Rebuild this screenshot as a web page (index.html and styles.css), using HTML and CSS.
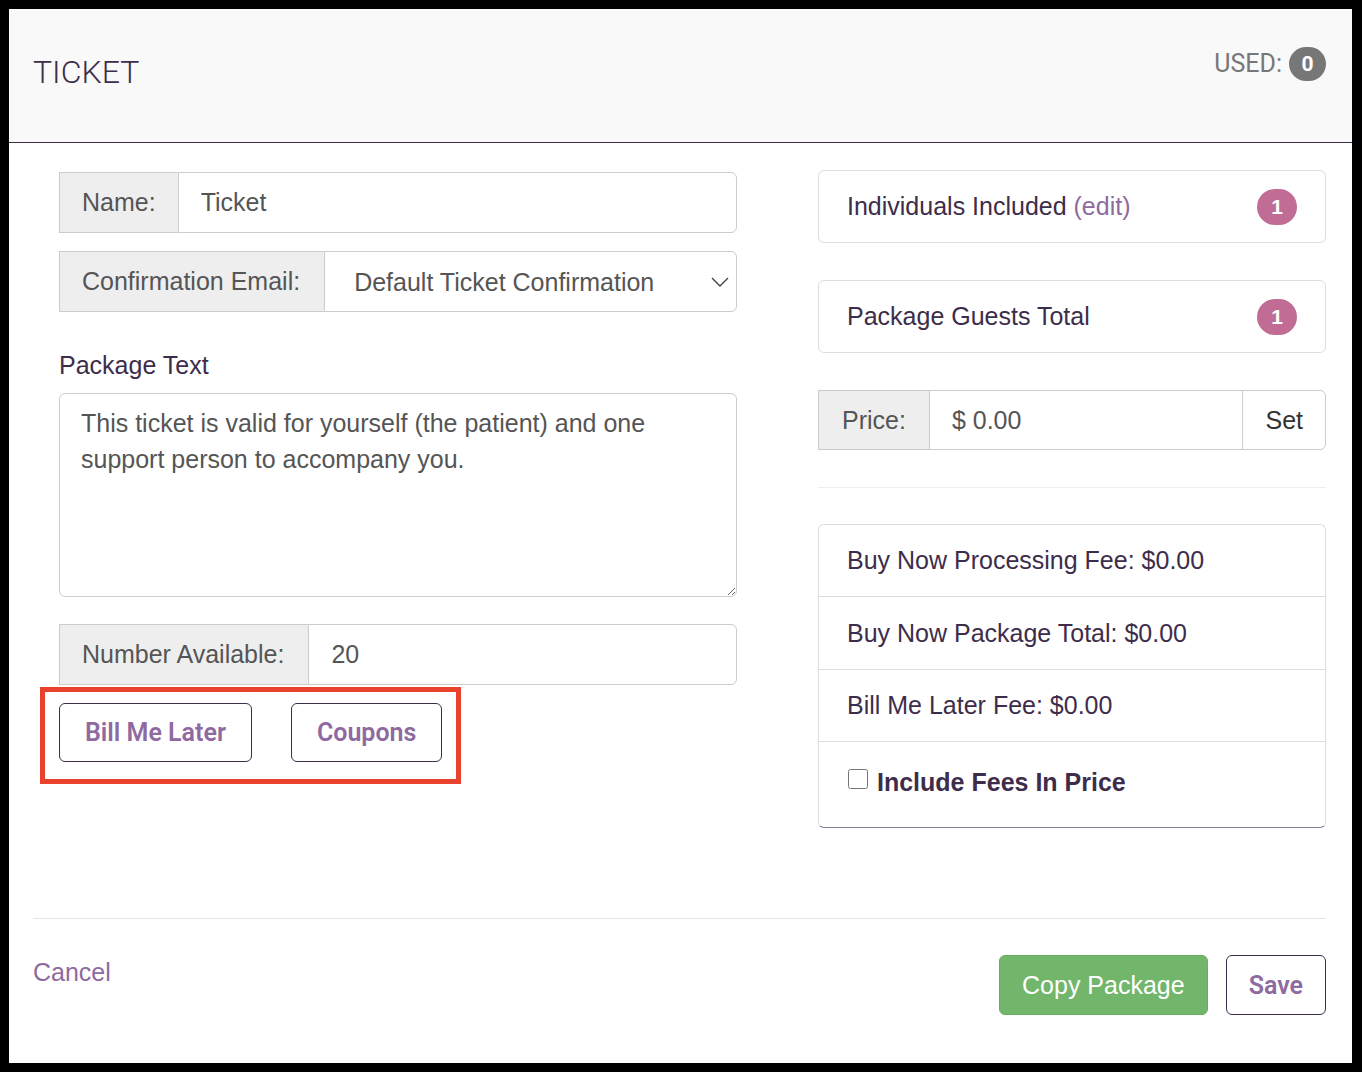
FILE: index.html
```html
<!DOCTYPE html>
<html lang="en">
<head>
<meta charset="UTF-8">
<title>Edit Package – Ticket</title>
<link rel="stylesheet" href="styles.css">
</head>
<body>

<div class="modal">

  <!-- ===== HEADER ===== -->
  <div class="modal-header">
    <h2 class="modal-title">TICKET</h2>
    <div class="used">USED: <span class="count">0</span></div>
  </div>

  <!-- ===== BODY ===== -->
  <div class="modal-body">

    <div class="col-left">
      <div class="input-group">
        <span class="addon">Name:</span>
        <input class="form-control" value="Ticket">
      </div>

      <div class="input-group">
        <span class="addon wide">Confirmation Email:</span>
        <div class="select-wrap">
          <select class="form-control select">
            <option>Default Ticket Confirmation</option>
          </select>
          <svg class="chevron" width="18" height="10" viewBox="0 0 18 10">
            <polyline points="1,1 9,9 17,1" fill="none" stroke="#444" stroke-width="1.4"/>
          </svg>
        </div>
      </div>

      <label class="field-label" for="pkgText">Package Text</label>
      <textarea id="pkgText" class="text-box">This ticket is valid for yourself (the patient) and one support person to accompany you.</textarea>

      <div class="input-group spaced">
        <span class="addon wide">Number Available:</span>
        <input class="form-control" value="20">
      </div>

      <div class="highlight">
        <button class="btn-outline">Bill Me Later</button>
        <button class="btn-outline">Coupons</button>
      </div>
    </div>

    <div class="col-right">
      <div class="card">
        <span>Individuals Included <a class="link" href="#">(edit)</a></span>
        <span class="badge">1</span>
      </div>

      <div class="card">
        <span>Package Guests Total</span>
        <span class="badge">1</span>
      </div>

      <div class="input-group price">
        <span class="addon">Price:</span>
        <input class="form-control flat" value="$ 0.00">
        <button class="btn-set">Set</button>
      </div>

      <hr class="divider">

      <div class="list">
        <div class="list-item">Buy Now Processing Fee: $0.00</div>
        <div class="list-item tall">Buy Now Package Total: $0.00</div>
        <div class="list-item">Bill Me Later Fee: $0.00</div>
        <div class="list-item last">
          <label class="check"><input type="checkbox"> Include Fees In Price</label>
        </div>
      </div>
    </div>

  </div>

  <!-- ===== FOOTER ===== -->
  <div class="modal-footer">
    <a class="link cancel" href="#">Cancel</a>
    <div class="actions">
      <button class="btn-green">Copy Package</button>
      <button class="btn-outline save">Save</button>
    </div>
  </div>

</div>

</body>
</html>
```

FILE: styles.css
```css
* { box-sizing: border-box; }

body {
  margin: 0;
  padding: 9px 10px 9px 9px;
  background: #000;
  font-family: "Liberation Sans", Arial, sans-serif;
  font-size: 25px;
  color: #3d2d4a;
}

.modal {
  height: 1054px;
  background: #fff;
  display: flex;
  flex-direction: column;
}

/* ===== HEADER ===== */
.modal-header {
  height: 134px;
  padding: 0 26px 0 24px;
  background: #f9f9f9;
  border-bottom: 1px solid #3d2d4a;
  display: flex;
  justify-content: space-between;
  align-items: flex-start;
}

.modal-title {
  margin: 43px 0 0;
  font: 300 32px/40px Roboto, sans-serif;
  color: #3d2d4a;
}

.used {
  margin-top: 38px;
  display: flex;
  align-items: center;
  gap: 7px;
  font: 25px/34px Roboto, sans-serif;
  color: #777;
}

.used .count {
  width: 37px;
  height: 34px;
  border-radius: 17px;
  background: #777;
  color: #fff;
  font-weight: 700;
  font-size: 21px;
  display: flex;
  align-items: center;
  justify-content: center;
}

/* ===== BODY ===== */
.modal-body {
  flex: 1;
  display: flex;
  justify-content: space-between;
  padding: 27px 26px 0 50px;
}

.col-left {
  width: 678px;
  margin-top: 2px;
}

.col-right {
  width: 508px;
}

/* input groups */
.input-group {
  display: flex;
  height: 61px;
}

.input-group + .input-group { margin-top: 18px; }
.input-group.spaced { margin-top: 27px; }

.addon {
  display: flex;
  align-items: center;
  padding: 0 22px;
  background: #eee;
  border: 1px solid #ccc;
  border-right: 0;
  color: #555;
  white-space: nowrap;
}

.addon.wide { padding-right: 24px; }

.form-control {
  flex: 1;
  min-width: 0;
  height: 100%;
  padding: 0 22px;
  border: 1px solid #ccc;
  border-radius: 0 6px 6px 0;
  font: inherit;
  color: #555;
  background: #fff;
}

.select-wrap {
  position: relative;
  flex: 1;
  display: flex;
}

.select {
  appearance: none;
  -webkit-appearance: none;
  padding-left: 29px;
}

.chevron {
  position: absolute;
  right: 8px;
  top: 26px;
}

.field-label {
  display: block;
  margin: 38px 0 13px;
  line-height: 30px;
  color: #3d2d4a;
}

.text-box {
  display: block;
  width: 100%;
  height: 204px;
  padding: 11px 21px;
  border: 1px solid #ccc;
  border-radius: 6px;
  font: inherit;
  line-height: 36px;
  color: #555;
  resize: vertical;
}

/* red frame round the extra buttons */
.highlight {
  display: inline-flex;
  gap: 39px;
  margin: 2px 0 0 -19px;
  padding: 11px 14px 17px;
  border: 5px solid #e8412c;
}

.btn-outline {
  height: 59px;
  padding: 0 25px;
  border: 1px solid #3d2d4a;
  border-radius: 6px;
  background: #fff;
  color: #8e6aa0;
  font: 600 25px Roboto, sans-serif;
}

/* right side */
.card {
  height: 73px;
  padding: 0 28px;
  border: 1px solid #ddd;
  border-radius: 6px;
  display: flex;
  align-items: center;
  justify-content: space-between;
}

.card + .card { margin-top: 37px; }

.link {
  color: #8e6aa0;
  text-decoration: none;
}

.badge {
  width: 40px;
  height: 36px;
  border-radius: 18px;
  background: #c06c94;
  color: #fff;
  font-weight: 700;
  font-size: 21px;
  display: flex;
  align-items: center;
  justify-content: center;
}

.input-group.price {
  height: 60px;
  margin-top: 37px;
}

.price .addon { padding: 0 23px; }

.form-control.flat {
  border-radius: 0;
  padding-left: 22px;
}

.btn-set {
  margin-left: -1px;
  padding: 0 22px;
  border: 1px solid #ccc;
  border-radius: 0 6px 6px 0;
  background: #fff;
  color: #333;
  font: inherit;
}

.divider {
  margin: 37px 0 36px;
  border: 0;
  border-top: 1px solid #eee;
}

.list {
  border: 1px solid #ddd;
  border-bottom-color: #8a7a9c;
  border-radius: 6px;
}

.list-item {
  height: 72px;
  padding: 0 28px;
  border-bottom: 1px solid #ddd;
  display: flex;
  align-items: center;
}

.list-item.tall { height: 73px; }

.list-item.last {
  height: 85px;
  border-bottom: 0;
  align-items: flex-start;
  padding-top: 26px;
}

.check {
  font-weight: 700;
  display: flex;
  align-items: center;
}

.check input {
  width: 20px;
  height: 20px;
  margin: -8px 9px 0 1px;
}

/* ===== FOOTER ===== */
.modal-footer {
  margin: 0 26px 0 24px;
  padding: 36px 0 48px;
  border-top: 1px solid #e5e5e5;
  display: flex;
  justify-content: space-between;
  align-items: flex-start;
}

.cancel {
  line-height: 34px;
}

.actions {
  display: flex;
  gap: 18px;
}

.btn-green {
  height: 60px;
  padding: 0 22px;
  border: 1px solid #6aae63;
  border-radius: 6px;
  background: #72b66b;
  color: #fff;
  font: inherit;
}

.btn-outline.save {
  height: 60px;
  padding: 0 22px;
}
```
